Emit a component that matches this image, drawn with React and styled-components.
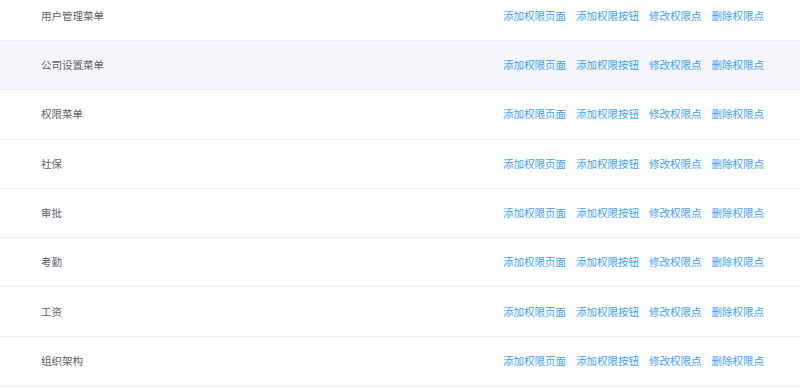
import React from "react";
import styled, { createGlobalStyle } from "styled-components";

const GlobalStyle = createGlobalStyle`
  html, body {
    margin: 0;
    padding: 0;
    background: #fff;
    overflow: hidden;
  }
  body {
    font-family: "Noto Sans CJK SC", "Noto Sans", sans-serif;
  }
`;

const menus = [
  { name: "用户管理菜单" },
  { name: "公司设置菜单", hover: true },
  { name: "权限菜单" },
  { name: "社保" },
  { name: "审批" },
  { name: "考勤" },
  { name: "工资" },
  { name: "组织架构" },
];

const actions = ["添加权限页面", "添加权限按钮", "修改权限点", "删除权限点"];

function App() {
  return (
    <>
      <GlobalStyle />
      <Table>
        {menus.map((m) => (
          <Row key={m.name} $hover={m.hover}>
            <NameCell>{m.name}</NameCell>
            <ActionCell>
              {actions.map((a) => (
                <LinkButton key={a}>{a}</LinkButton>
              ))}
            </ActionCell>
          </Row>
        ))}
      </Table>
    </>
  );
}

const Table = styled.div`
  display: flex;
  flex-direction: column;
  margin-top: -8.3px;
  width: 800px;
`;

const Row = styled.div`
  display: flex;
  align-items: center;
  justify-content: space-between;
  height: 49.3px;
  box-sizing: border-box;
  border-bottom: 1px solid #ebeef5;
  background: ${(p) => (p.$hover ? "#f5f7fa" : "#fff")};
`;

const NameCell = styled.div`
  padding-left: 41px;
  color: #606266;
  font-size: 10.5px;
  line-height: 16px;
`;

const ActionCell = styled.div`
  display: flex;
  gap: 10px;
  padding-right: 36px;
`;

const LinkButton = styled.span`
  color: #409eff;
  font-size: 10.5px;
  line-height: 16px;
  cursor: pointer;
`;

export default App;
